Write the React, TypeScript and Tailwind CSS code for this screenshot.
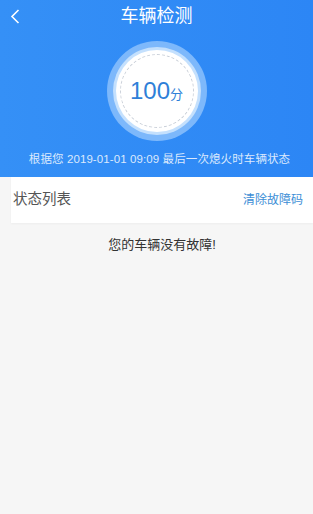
export default function App() {
  return (
    <div
      className="flex h-[514px] w-[313px] flex-col bg-[#f6f6f6]"
      style={{ fontFamily: '"Liberation Sans", "Noto Sans CJK SC", sans-serif' }}
    >
      <div className="flex h-[177px] flex-col bg-gradient-to-r from-[#3590f6] to-[#2c86f5]">
        <div className="relative flex h-[33px] items-center justify-center">
          <svg
            className="absolute left-[9px] top-[8px]"
            width="12"
            height="17"
            viewBox="0 0 12 17"
            fill="none"
            stroke="white"
            strokeWidth="1.6"
          >
            <path d="M9.5 2 L3 8.5 L9.5 15" />
          </svg>
          <span className="-mt-[2px] text-[18px] leading-none text-white">车辆检测</span>
        </div>
        <div className="mt-[8px] flex justify-center">
          <div className="flex h-[100px] w-[100px] items-center justify-center rounded-full bg-[#7db8fb]">
            <div className="flex h-[88px] w-[88px] items-center justify-center rounded-full bg-[#c4e0fd]">
              <div className="flex h-[82px] w-[82px] items-center justify-center rounded-full bg-white">
                <div className="flex h-[74px] w-[74px] items-center justify-center rounded-full border border-dashed border-[#c9cfd8]">
                  <span className="text-[24px] leading-none text-[#2f7fd8]">
                    100<span className="text-[13px]">分</span>
                  </span>
                </div>
              </div>
            </div>
          </div>
        </div>
        <div className="mt-[13px] ml-[6px] text-center text-[11.5px] leading-none tracking-[0.1px] text-[#dbe9fd]">
          根据您 2019-01-01 09:09 最后一次熄火时车辆状态
        </div>
      </div>
      <div className="ml-[11px] flex flex-col">
        <div className="flex h-[46px] items-center justify-between bg-white pl-[2px] pr-[10px] shadow-[0_1px_2px_rgba(0,0,0,0.04)]">
          <span className="text-[14.5px] text-[#555]">状态列表</span>
          <span className="text-[12px] text-[#3c8ed6]">清除故障码</span>
        </div>
        <div className="mt-[12px] text-center text-[13px] text-[#333]">您的车辆没有故障!</div>
      </div>
    </div>
  );
}
